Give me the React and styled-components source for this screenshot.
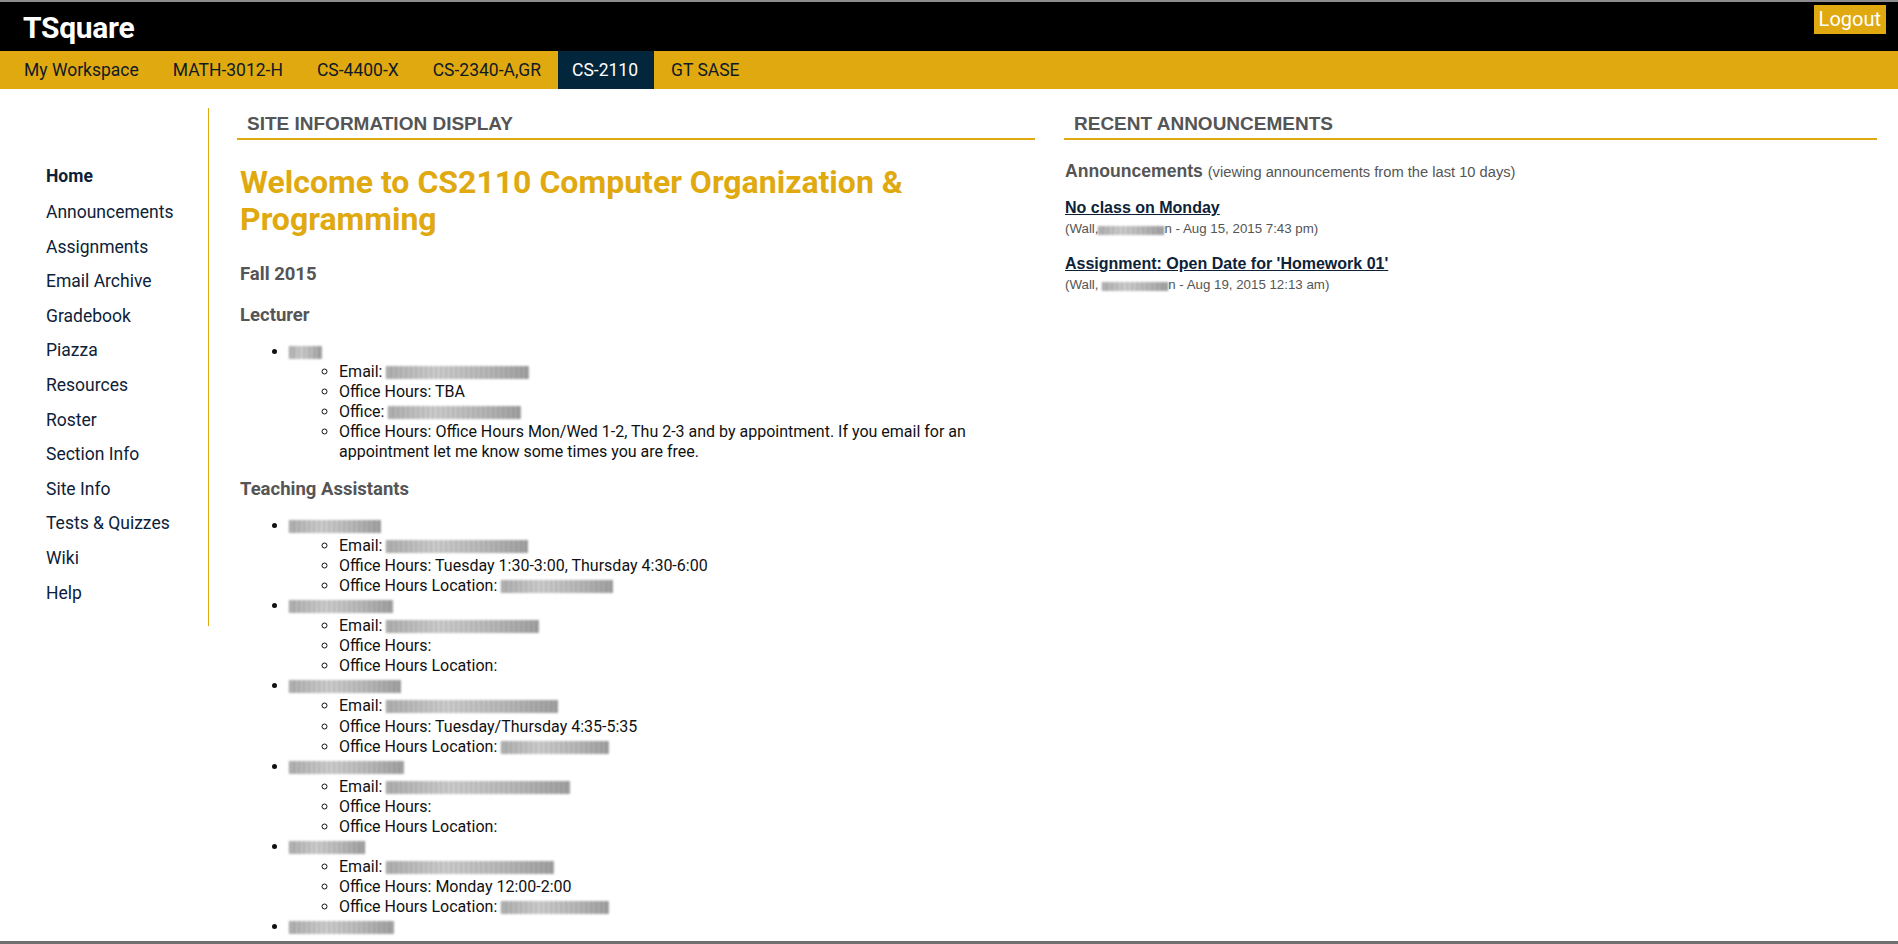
import React from 'react'
import styled, { createGlobalStyle } from 'styled-components'

const GlobalStyle = createGlobalStyle`
  html, body {
    margin: 0;
    padding: 0;
    background: #fff;
  }
  body {
    border-top: 2px solid #8c8c8c;
    font-family: Roboto, "Liberation Sans", Arial, sans-serif;
    color: #111;
  }
`

const gold = '#e0a90f'
const navy = '#0d2238'

const sites = ['My Workspace', 'MATH-3012-H', 'CS-4400-X', 'CS-2340-A,GR', 'CS-2110', 'GT SASE']
const tools = ['Home', 'Announcements', 'Assignments', 'Email Archive', 'Gradebook', 'Piazza', 'Resources', 'Roster', 'Section Info', 'Site Info', 'Tests & Quizzes', 'Wiki', 'Help']

const tas = [
  { name: 92, email: 142, hours: 'Tuesday 1:30-3:00, Thursday 4:30-6:00', loc: 112 },
  { name: 104, email: 153, hours: '', loc: 0 },
  { name: 112, email: 172, hours: 'Tuesday/Thursday 4:35-5:35', loc: 108 },
  { name: 115, email: 184, hours: '', loc: 0 },
  { name: 76, email: 168, hours: 'Monday 12:00-2:00', loc: 108 },
  { name: 105, email: 0, hours: '', loc: 0 },
]

const announcements = [
  { title: 'No class on Monday', date: 'Aug 15, 2015 7:43 pm', sep: '' },
  { title: "Assignment: Open Date for 'Homework 01'", date: 'Aug 19, 2015 12:13 am', sep: ' ' },
]

const App = () => {
  return (
    <>
      <GlobalStyle />
      <Header>
        <Logo>TSquare</Logo>
        <LogoutButton>Logout</LogoutButton>
      </Header>
      <SiteNav>
        {sites.map((s) => (
          <SiteTab key={s} $active={s === 'CS-2110'}>{s}</SiteTab>
        ))}
      </SiteNav>
      <Page>
        <ToolMenu>
          {tools.map((t) => (
            <ToolItem key={t} $current={t === 'Home'}>{t}</ToolItem>
          ))}
        </ToolMenu>

        <MainColumn>
          <PortletTitle>SITE INFORMATION DISPLAY</PortletTitle>
          <Content>
            <Welcome>Welcome to CS2110 Computer Organization &amp; Programming</Welcome>
            <SubHead $top={25}>Fall 2015</SubHead>
            <SubHead $top={19}>Lecturer</SubHead>
            <People>
              <li>
                <Redact $w={33} />
                <Details>
                  <li>Email: <Redact $w={143} /></li>
                  <li>Office Hours: TBA</li>
                  <li>Office: <Redact $w={133} /></li>
                  <li>
                    Office Hours: Office Hours Mon/Wed 1-2, Thu 2-3 and by appointment. If you email for an
                    appointment let me know some times you are free.
                  </li>
                </Details>
              </li>
            </People>
            <SubHead $top={15}>Teaching Assistants</SubHead>
            <People>
              {tas.map((ta, i) => (
                <li key={i}>
                  <Redact $w={ta.name} />
                  {ta.email > 0 && (
                    <Details>
                      <li>Email: <Redact $w={ta.email} /></li>
                      <li>Office Hours: {ta.hours}</li>
                      <li>Office Hours Location: {ta.loc > 0 && <Redact $w={ta.loc} />}</li>
                    </Details>
                  )}
                  {ta.email === 0 && (
                    <Details>
                      <li>Faculty Liaison: Contact only</li>
                    </Details>
                  )}
                </li>
              ))}
            </People>
          </Content>
        </MainColumn>

        <SideColumn>
          <PortletTitle>RECENT ANNOUNCEMENTS</PortletTitle>
          <AnnContent>
            <AnnHead>
              Announcements <small>(viewing announcements from the last 10 days)</small>
            </AnnHead>
            {announcements.map((a) => (
              <AnnItem key={a.title}>
                <AnnLink href="#">{a.title}</AnnLink>
                <AnnMeta>
                  (Wall,{a.sep}<Redact $w={66} $h={9} />n - {a.date})
                </AnnMeta>
              </AnnItem>
            ))}
          </AnnContent>
        </SideColumn>
      </Page>
      <WindowEdge />
    </>
  )
}

const Header = styled.header`
  height: 49px;
  background: #000;
  display: flex;
  align-items: flex-start;
  justify-content: space-between;
  padding: 0 12px 0 23px;
`

const Logo = styled.h1`
  margin: 0;
  padding-top: 4px;
  color: #fff;
  font-family: Roboto, sans-serif;
  font-weight: 700;
  font-size: 30px;
  line-height: 44px;
  letter-spacing: -0.3px;
`

const LogoutButton = styled.button`
  margin-top: 3px;
  height: 29px;
  padding: 0 5px;
  border: none;
  background: ${gold};
  color: #fff;
  font-family: Roboto, sans-serif;
  font-size: 20px;
  line-height: 29px;
  cursor: pointer;
`

const SiteNav = styled.nav`
  height: 38px;
  background: ${gold};
  display: flex;
  padding-left: 7px;
`

const SiteTab = styled.a`
  display: flex;
  align-items: center;
  padding: ${(p) => (p.$active ? '0 16px 0 14px' : '0 17px')};
  background: ${(p) => (p.$active ? '#02273c' : 'transparent')};
  color: ${(p) => (p.$active ? '#fff' : '#0f1a26')};
  font-family: Roboto, sans-serif;
  font-size: 17.5px;
  white-space: nowrap;
`

const Page = styled.div`
  display: flex;
  align-items: flex-start;
  padding-top: 19px;
`

const ToolMenu = styled.ul`
  list-style: none;
  margin: 0;
  width: 209px;
  padding: 51px 0 16px 46px;
  box-sizing: border-box;
  border-right: 1px solid ${gold};
`

const ToolItem = styled.li`
  font-family: Roboto, sans-serif;
  font-size: 17.5px;
  line-height: 34.6px;
  color: ${navy};
  font-weight: ${(p) => (p.$current ? 700 : 400)};
  margin-bottom: ${(p) => (p.$current ? '1.5px' : '0')};
`

const MainColumn = styled.section`
  width: 798px;
  margin-left: 28px;
`

const SideColumn = styled.section`
  width: 813px;
  margin-left: 29px;
`

const PortletTitle = styled.h2`
  margin: 0;
  height: 30px;
  padding-left: 10px;
  border-bottom: 2px solid ${gold};
  font-family: "Liberation Sans", Arial, sans-serif;
  font-weight: 700;
  font-size: 19px;
  line-height: 32px;
  color: #555;
`

const Content = styled.div`
  padding-left: 3px;
`

const Welcome = styled.h3`
  margin: 24px 0 0;
  width: 700px;
  font-family: Roboto, sans-serif;
  font-weight: 700;
  font-size: 32px;
  line-height: 37px;
  color: ${gold};
`

const SubHead = styled.h4`
  margin: ${(p) => p.$top}px 0 0;
  font-family: Roboto, sans-serif;
  font-weight: 700;
  font-size: 18.5px;
  line-height: 22px;
  color: #555;
`

const People = styled.ul`
  margin: 16px 0 0;
  padding-left: 49px;
  list-style: disc;
  font-family: Roboto, sans-serif;
  font-size: 16px;
  line-height: 20.1px;
  color: #111;
`

const Details = styled.ul`
  margin: 0;
  padding-left: 50px;
  list-style: circle;
  width: 650px;
`

const Redact = styled.span`
  display: inline-block;
  vertical-align: -2px;
  width: ${(p) => p.$w}px;
  height: ${(p) => p.$h || 13}px;
  background:
    repeating-linear-gradient(90deg, rgba(60, 60, 60, 0.4) 0 1px, transparent 1px 3px, rgba(90, 90, 90, 0.25) 3px 4px, transparent 4px 5px),
    linear-gradient(90deg, #a8a8a8 0%, #cfcfcf 35%, #b4b4b4 70%, #959595 100%);
  filter: blur(0.8px);
  opacity: 0.85;
`

const AnnContent = styled.div`
  padding-left: 1px;
`

const AnnHead = styled.h3`
  margin: 20px 0 0;
  font-family: "Liberation Sans", Arial, sans-serif;
  font-weight: 700;
  font-size: 17.6px;
  line-height: 22px;
  color: #555;

  small {
    font-weight: 400;
    font-size: 14.7px;
  }
`

const AnnItem = styled.div`
  margin-top: 14px;

  & + & {
    margin-top: 15px;
  }
`

const AnnLink = styled.a`
  display: block;
  font-family: "Liberation Sans", Arial, sans-serif;
  font-weight: 700;
  font-size: 16px;
  line-height: 22px;
  color: ${navy};
  text-decoration: underline;
`

const AnnMeta = styled.div`
  margin-top: 1px;
  font-family: "Liberation Sans", Arial, sans-serif;
  font-size: 13.3px;
  line-height: 18px;
  color: #555;
`

const WindowEdge = styled.div`
  position: fixed;
  left: 0;
  right: 0;
  bottom: 0;
  height: 3px;
  background: #6f6f6f;
`

export default App
